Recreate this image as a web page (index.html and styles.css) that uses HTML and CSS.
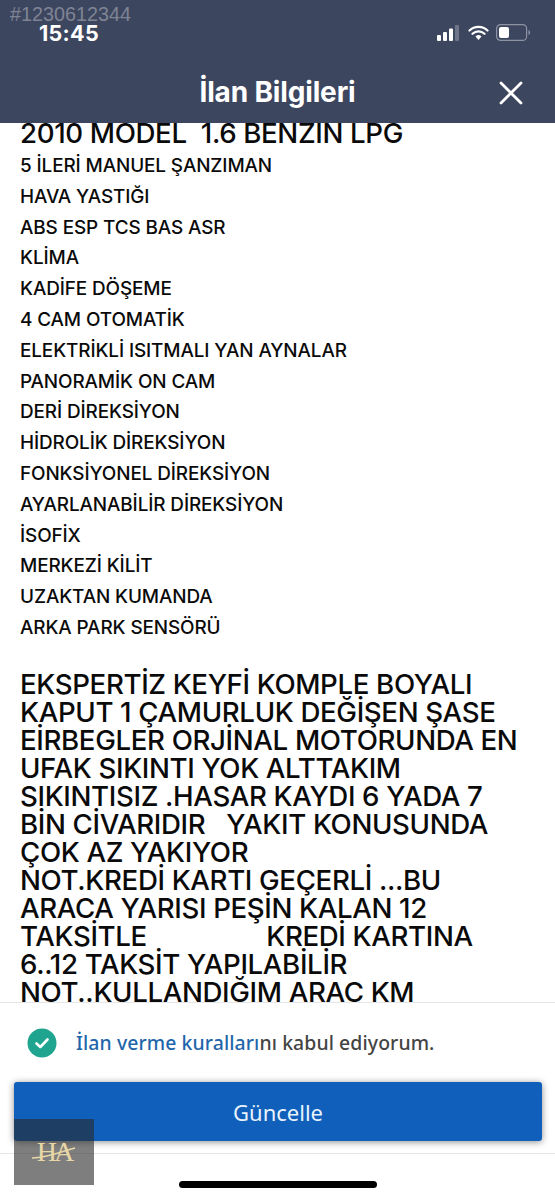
FILE: index.html
```html
<!DOCTYPE html>
<html lang="tr">
<head>
<meta charset="utf-8">
<title>İlan Bilgileri</title>
<link rel="stylesheet" href="styles.css">
</head>
<body>
<div class="screen">
  <header class="header">
    <div class="status">
      <span class="time">15:45</span>
      <div class="status-icons">
        <svg width="24" height="16" viewBox="0 0 24 16"><rect x="0" y="10" width="4" height="6" rx="1" fill="#fff"/><rect x="6" y="7" width="4" height="9" rx="1" fill="#fff"/><rect x="12" y="3.500" width="4" height="12.500" rx="1" fill="#fff"/><rect x="18" y="0" width="4" height="16" rx="1" fill="#6f7689"/></svg>
        <svg width="21" height="16" viewBox="0 0 21 16"><path d="M1.500 5.500a13 13 0 0 1 18 0M4.500 8.800a8.800 8.800 0 0 1 12 0" fill="none" stroke="#fff" stroke-width="2.200" stroke-linecap="round"/><path d="M7.500 11.500a4.400 4.400 0 0 1 6 0L10.500 15z" fill="#fff"/></svg>
        <svg width="35" height="17" viewBox="0 0 35 17"><rect x="0.600" y="0.600" width="30" height="15.800" rx="4" fill="none" stroke="#8d93a3" stroke-width="1.200"/><rect x="3" y="3" width="10" height="11" rx="2" fill="#fff"/><path d="M32.500 6v5c1.200-.5 1.600-1.400 1.600-2.500s-.4-2-1.600-2.500z" fill="#8d93a3"/></svg>
      </div>
    </div>
    <div class="nav">
      <h1 class="nav-title">İlan Bilgileri</h1>
      <svg class="close" width="24" height="24" viewBox="0 0 24 24"><path d="M2 2l20 20M22 2L2 22" stroke="#fff" stroke-width="2.800" stroke-linecap="round"/></svg>
    </div>
  </header>

  <main class="content">
    <p class="model">2010 MODEL  1.6 BENZIN LPG</p>
    <ul class="features">
      <li>5 İLERİ MANUEL ŞANZIMAN</li>
      <li>HAVA YASTIĞI</li>
      <li>ABS ESP TCS BAS ASR</li>
      <li>KLİMA</li>
      <li>KADİFE DÖŞEME</li>
      <li>4 CAM OTOMATİK</li>
      <li>ELEKTRİKLİ ISITMALI YAN AYNALAR</li>
      <li>PANORAMİK ON CAM</li>
      <li>DERİ DİREKSİYON</li>
      <li>HİDROLİK DİREKSİYON</li>
      <li>FONKSİYONEL DİREKSİYON</li>
      <li>AYARLANABİLİR DİREKSİYON</li>
      <li>İSOFİX</li>
      <li>MERKEZİ KİLİT</li>
      <li>UZAKTAN KUMANDA</li>
      <li>ARKA PARK SENSÖRÜ</li>
    </ul>
    <p class="desc">EKSPERTİZ KEYFİ KOMPLE BOYALI
KAPUT 1 ÇAMURLUK DEĞİŞEN ŞASE
EİRBEGLER ORJİNAL MOTORUNDA EN
UFAK SIKINTI YOK ALTTAKIM
SIKINTISIZ .HASAR KAYDI 6 YADA 7
BİN CİVARIDIR   YAKIT KONUSUNDA
ÇOK AZ YAKIYOR
NOT.KREDİ KARTI GEÇERLİ ...BU
ARACA YARISI PEŞİN KALAN 12
TAKSİTLE                 KREDİ KARTINA
6..12 TAKSİT YAPILABİLİR
NOT..KULLANDIĞIM ARAC KM</p>
  </main>

  <section class="footer">
    <div class="agree">
      <svg class="check" width="30" height="30" viewBox="0 0 30 30"><circle cx="15" cy="15" r="14.500" fill="#1fa58f"/><path d="M9.500 15.500l3.800 3.500 7.200-7.500" fill="none" stroke="#fff" stroke-width="2.600" stroke-linecap="round" stroke-linejoin="round"/></svg>
      <p class="agree-text"><span class="link">İlan verme kuralları</span>nı kabul ediyorum.</p>
    </div>
    <button class="update" type="button">Güncelle</button>
  </section>

  <div class="home"><span class="home-bar"></span></div>

  <span class="code">#1230612344</span>
  <div class="brand">
    <span class="brand-mark">HA</span>
    <svg class="brand-swoosh" width="46" height="14" viewBox="0 0 46 14"><path d="M1 12C12 12 20 9 44 2" fill="none" stroke="#e7d6a6" stroke-width="1.500"/></svg>
  </div>
</div>
</body>
</html>
```

FILE: styles.css
```css
* { box-sizing: border-box; margin: 0; padding: 0; }
html, body { background: #fff; }
body { width: 555px; height: 1200px; overflow: hidden; font-family: Inter, "Liberation Sans", sans-serif; }
.screen { position: relative; width: 555px; height: 1200px; display: flex; flex-direction: column; overflow: hidden; }

.header { flex: none; height: 123px; background: #3d465f; color: #fff; display: flex; flex-direction: column; }
.status { height: 60px; display: flex; justify-content: space-between; align-items: flex-start; padding: 23px 24px 0 39px; }
.time { font-size: 21.500px; line-height: 20px; font-weight: 700; letter-spacing: .3px; }
.status-icons { display: flex; align-items: center; gap: 7px; padding-top: 1px; }
.nav { position: relative; flex: 1; display: flex; align-items: flex-start; justify-content: center; }
.nav-title { font-size: 28px; line-height: 32px; font-weight: 700; letter-spacing: -.15px; margin-top: 16px; }
.close { position: absolute; right: 32px; top: 21px; }

.content { flex: none; height: 879px; overflow: hidden; padding: 0 20px; color: #0a0a0a; }
.model { font-size: 27.650px; line-height: 20px; height: 20px; letter-spacing: -.35px; white-space: pre; font-weight: 500; }
.features { list-style: none; margin-top: 8px; }
.features li { font-size: 18.900px; line-height: 30.800px; font-weight: 500; letter-spacing: -.1px; white-space: nowrap; }
.desc { margin-top: 26px; font-size: 27.650px; line-height: 28px; font-weight: 500; letter-spacing: -.35px; white-space: pre; }

.footer { flex: none; height: 152px; background: #fff; border: 1px solid #e6e6e6; border-width: 1px 0; }
.agree { height: 79px; display: flex; align-items: center; gap: 19px; padding: 0 0 0 27px; }
.agree-text { font-family: "Noto Sans", Roboto, sans-serif; font-size: 19.400px; font-weight: 500; color: #444; letter-spacing: .1px; }
.link { color: #1f66ab; }
.update { display: block; width: 528px; height: 59px; margin-left: 14px; border: 0; border-radius: 3px; background: #0f5fbb; color: #e8f2fb; font-family: "Noto Sans", Roboto, sans-serif; font-size: 22px; box-shadow: 0 1px 7px rgba(0, 0, 0, .45); }

.home { flex: 1; display: flex; justify-content: center; padding-top: 27px; }
.home-bar { display: block; width: 198px; height: 7px; border-radius: 4px; background: #000; }

.code { position: absolute; left: 10px; top: 4px; font-family: "Liberation Sans", sans-serif; font-size: 19.800px; line-height: 20px; color: #7f8494; }
.brand { position: absolute; left: 14px; top: 1119px; width: 80px; height: 66px; background: rgba(40, 40, 40, .6); display: flex; align-items: center; justify-content: center; }
.brand-mark { font-family: "Liberation Serif", serif; font-size: 28px; line-height: 28px; letter-spacing: -3px; color: #e7d6a6; }
.brand-swoosh { position: absolute; left: 17px; top: 27px; }
```
